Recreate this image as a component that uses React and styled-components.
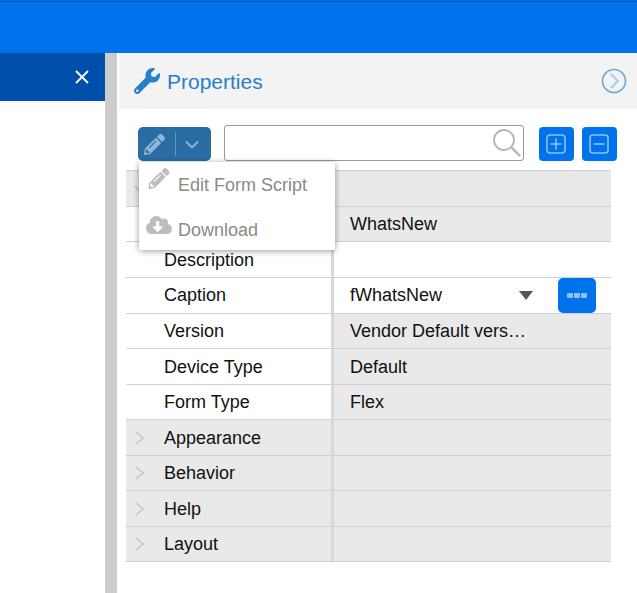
import React from 'react'
import styled, { createGlobalStyle } from 'styled-components'
import { FaWrench, FaPencilAlt, FaCloudDownloadAlt } from 'react-icons/fa'

const GlobalStyle = createGlobalStyle`
  html, body {
    margin: 0;
    padding: 0;
    height: 100%;
    overflow: hidden;
    background: #fff;
    font-family: "Liberation Sans", Arial, sans-serif;
  }
`

// first two labels sit under the open menu, so they are left empty
const rows = [
  { id: 'general', label: '', group: true, open: true },
  { id: 'name', label: '', value: 'WhatsNew', valueGray: true },
  { id: 'description', label: 'Description', value: '' },
  { id: 'caption', label: 'Caption', value: 'fWhatsNew', select: true },
  { id: 'version', label: 'Version', value: 'Vendor Default vers…', valueGray: true },
  { id: 'device', label: 'Device Type', value: 'Default', valueGray: true },
  { id: 'form', label: 'Form Type', value: 'Flex', valueGray: true },
  { id: 'appearance', label: 'Appearance', group: true },
  { id: 'behavior', label: 'Behavior', group: true },
  { id: 'help', label: 'Help', group: true },
  { id: 'layout', label: 'Layout', group: true },
]

const Chevron = ({ open }) => (
  <svg width="12" height="16" viewBox="0 0 12 16" fill="none" stroke="#c4c4c4" strokeWidth="1.5">
    <path d={open ? 'M1 5l5 6 5-6' : 'M2 2l7 6-7 6'} />
  </svg>
)

export default function App() {
  return (
    <Page>
      <GlobalStyle />
      <TopBar>
        <TopLine />
      </TopBar>
      <Body>
        <LeftPanel>
          <LeftHeader>
            <svg width="16" height="16" viewBox="0 0 16 16" stroke="#fff" strokeWidth="1.8">
              <path d="M2 2l12 12M14 2L2 14" />
            </svg>
          </LeftHeader>
        </LeftPanel>
        <Splitter />
        <Main>
          <PropsHeader>
            <FaWrench size={26} color="#2a7fc9" />
            <Title>Properties</Title>
            <CollapseIcon width="26" height="26" viewBox="0 0 26 26" fill="none">
              <circle cx="13" cy="13" r="11.5" stroke="#6fa8d8" strokeWidth="1.6" />
              <path d="M10 6l7 7-7 7" stroke="#a9cbe8" strokeWidth="1.8" />
            </CollapseIcon>
          </PropsHeader>
          <Toolbar>
            <SplitButton>
              <FaPencilAlt size={21} color="#8db6d8" />
              <SplitDivider />
              <svg width="14" height="9" viewBox="0 0 14 9" fill="none" stroke="#8db6d8" strokeWidth="1.8">
                <path d="M1 1.5l6 6 6-6" />
              </svg>
            </SplitButton>
            <SearchBox>
              <SearchInput />
              <svg width="30" height="30" viewBox="0 0 30 30" fill="none" stroke="#b5b5b5">
                <circle cx="12" cy="12" r="10" strokeWidth="1.8" />
                <path d="M19 19l9 9" strokeWidth="2.4" />
              </svg>
            </SearchBox>
            <SquareButton>
              <svg width="20" height="20" viewBox="0 0 20 20" fill="none" stroke="#8fc1f5" strokeWidth="1.6">
                <rect x="1" y="1" width="18" height="18" rx="3" />
                <path d="M10 4.5v11M4.5 10h11" />
              </svg>
            </SquareButton>
            <SquareButton>
              <svg width="20" height="20" viewBox="0 0 20 20" fill="none" stroke="#8fc1f5" strokeWidth="1.6">
                <rect x="1" y="1" width="18" height="18" rx="3" />
                <path d="M4.5 10h11" />
              </svg>
            </SquareButton>
            <Menu>
              <MenuItem>
                <FaPencilAlt size={21} color="#bdbdbd" />
                <MenuLabel>Edit Form Script</MenuLabel>
              </MenuItem>
              <MenuItem>
                <FaCloudDownloadAlt size={26} color="#bdbdbd" />
                <MenuLabel $low>Download</MenuLabel>
              </MenuItem>
            </Menu>
          </Toolbar>
          <Grid>
            {rows.map(r => (
              <Row key={r.id} $tall={r.select}>
                <LabelCell $gray={r.group}>
                  <Arrow>{r.group && <Chevron open={r.open} />}</Arrow>
                  {r.label}
                </LabelCell>
                <ValueCell $gray={r.group || r.valueGray}>
                  {r.value}
                  {r.select && (
                    <SelectTools>
                      <Caret />
                      <DotsButton>
                        <Dot /><Dot /><Dot />
                      </DotsButton>
                    </SelectTools>
                  )}
                </ValueCell>
              </Row>
            ))}
          </Grid>
        </Main>
      </Body>
    </Page>
  )
}

const Page = styled.div`
  width: 637px;
  height: 593px;
  display: flex;
  flex-direction: column;
  overflow: hidden;
`
const TopBar = styled.div`
  height: 53px;
  flex-shrink: 0;
  background: #0073ec;
  padding-top: 1px;
  box-sizing: border-box;
`
const TopLine = styled.div`
  height: 1px;
  background: #0b57a8;
`
const Body = styled.div`
  flex: 1;
  display: flex;
  min-height: 0;
`
const LeftPanel = styled.div`
  width: 105px;
  flex-shrink: 0;
`
const LeftHeader = styled.div`
  height: 48px;
  background: #0050ab;
  display: flex;
  align-items: center;
  justify-content: flex-end;
  padding-right: 15px;
`
const Splitter = styled.div`
  width: 12px;
  flex-shrink: 0;
  background: #cccccc;
`
const Main = styled.div`
  flex: 1;
  min-width: 0;
  padding-left: 2px;
`
const PropsHeader = styled.div`
  height: 56px;
  background: #f3f3f3;
  display: flex;
  align-items: center;
  padding: 0 10px 0 15px;
`
const Title = styled.div`
  margin: 2px 0 0 7px;
  font-size: 21px;
  color: #2a7fc9;
`
const CollapseIcon = styled.svg`
  margin-left: auto;
`
const Toolbar = styled.div`
  position: relative;
  display: flex;
  align-items: flex-end;
  height: 36px;
  margin: 16px 0 9.4px 19px;
`
const SplitButton = styled.div`
  width: 73px;
  height: 34px;
  box-sizing: border-box;
  background: #2a6ca4;
  border-radius: 5px;
  display: flex;
  align-items: center;
  padding-left: 6px;
`
const SplitDivider = styled.div`
  width: 1px;
  height: 24px;
  background: #6496c0;
  margin: 0 9px 0 10px;
`
const SearchBox = styled.div`
  width: 300px;
  height: 36px;
  box-sizing: border-box;
  margin-left: 13px;
  border: 1px solid #9a9a9a;
  border-radius: 3px;
  display: flex;
  align-items: center;
  padding-right: 1px;
`
const SearchInput = styled.input`
  flex: 1;
  min-width: 0;
  border: 0;
  outline: none;
  background: transparent;
`
const SquareButton = styled.div`
  width: 35px;
  height: 34px;
  margin-left: 15px;
  background: #0073ec;
  border-radius: 4px;
  display: flex;
  align-items: center;
  justify-content: center;
  & + & {
    margin-left: 8px;
  }
  svg {
    margin-left: -1px;
  }
`
const Menu = styled.div`
  position: absolute;
  z-index: 2;
  left: 1px;
  top: 37px;
  width: 196px;
  height: 88px;
  background: #fff;
  box-shadow: 0 1px 6px rgba(0, 0, 0, 0.4);
  border-radius: 2px;
`
const MenuItem = styled.div`
  height: 44px;
  display: flex;
  align-items: flex-start;
  padding: 6px 0 0 7px;
  box-sizing: border-box;
  svg {
    width: 26px;
    flex-shrink: 0;
  }
`
const MenuLabel = styled.div`
  margin: ${p => (p.$low ? '8px' : '7px')} 0 0 6px;
  font-size: 18px;
  color: #8a8a8a;
`
const Grid = styled.div`
  margin: 0 26px 0 7px;
  display: grid;
  border-bottom: 1px solid #d0d0d0;
`
const Row = styled.div`
  height: ${p => (p.$tall ? '36px' : '35.5px')};
  display: grid;
  grid-template-columns: 205px 1fr;
  font-size: 18px;
  color: #111;
  line-height: 34px;
`
const Cell = styled.div`
  border-top: 1px solid #d0d0d0;
  background: ${p => (p.$gray ? '#e9e9e9' : '#fff')};
  white-space: nowrap;
`
const LabelCell = styled(Cell)`
  display: flex;
  align-items: center;
`
const Arrow = styled.div`
  width: 38px;
  padding-left: 8px;
  box-sizing: border-box;
  display: flex;
  align-items: center;
`
const ValueCell = styled(Cell)`
  position: relative;
  display: flex;
  align-items: center;
  padding-left: 16px;
  border-left: 3px solid #d8d8d8;
`
const SelectTools = styled.div`
  margin-left: auto;
  display: flex;
  align-items: center;
  padding-right: 15px;
`
const Caret = styled.div`
  width: 0;
  height: 0;
  border-left: 7.5px solid transparent;
  border-right: 7.5px solid transparent;
  border-top: 9px solid #555;
  margin-right: 25px;
`
const DotsButton = styled.div`
  width: 38px;
  height: 35px;
  background: #0073ec;
  border-radius: 5px;
  display: flex;
  align-items: center;
  justify-content: center;
  gap: 1px;
`
const Dot = styled.div`
  width: 6px;
  height: 5px;
  border-radius: 1px;
  background: #8fc1f5;
`
